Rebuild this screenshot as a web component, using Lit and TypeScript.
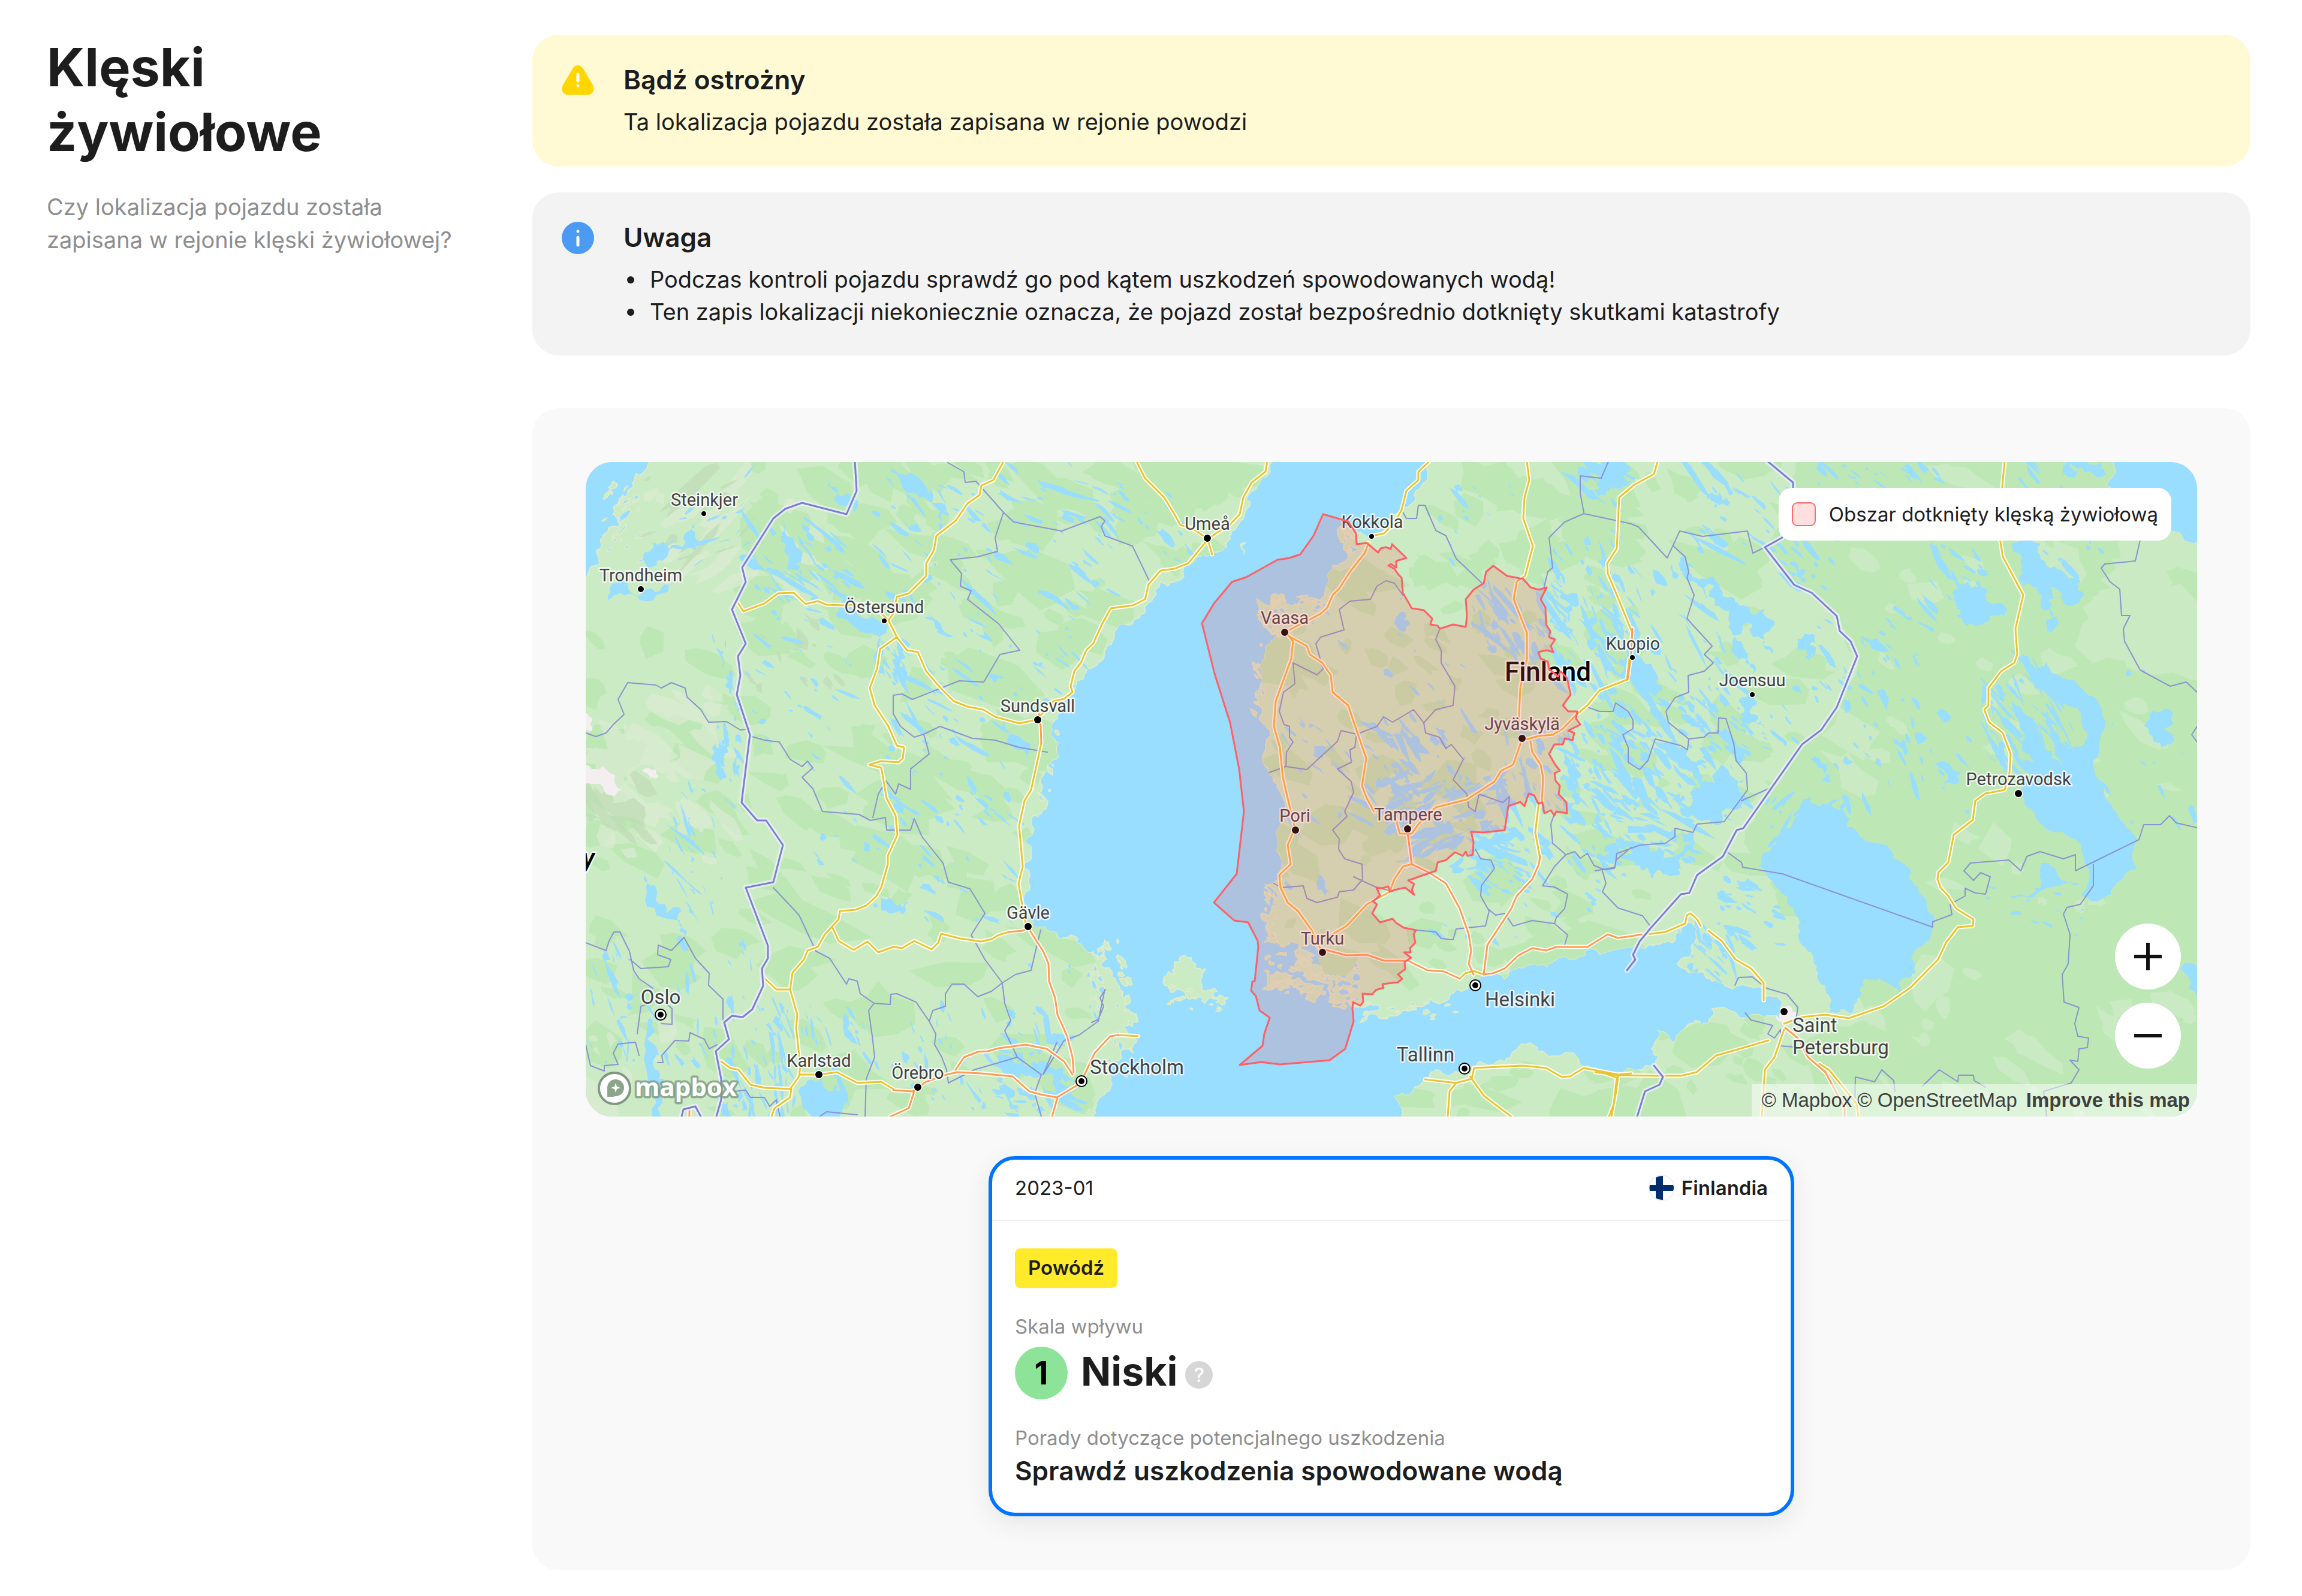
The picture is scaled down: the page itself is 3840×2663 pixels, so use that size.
import { LitElement, html, svg, css } from "lit";
import { customElement } from "lit/decorators.js";

type Pt = [number, number];

/* ---------- map geometry ---------- */

/* Each sheet maps its own survey grid onto the map canvas: [left, top, x step, y step]. */
const SHEETS: Record<string, [number, number, number, number]> = {
  W: [-6, -12, 0.574, 0.7079],
  C: [844, -12, 0.574, 0.7079],
  E: [1684, -12, 0.6505, 0.7079],
  D: [1964, 18, 0.472, 0.472],
  F: [1504, 8, 0.4464, 0.4464],
};

const at = (sheet: string, u: number, v: number): Pt => {
  const [x, y, sx, sy] = SHEETS[sheet];
  return [x + u * sx, y + v * sy];
};

/* Reads "W 1,2 3,4 C 5,6": a sheet letter, then points on that sheet. */
const points = (text: string): Pt[] => {
  const out: Pt[] = [];
  let sheet = "W";
  for (const token of text.trim().split(/\s+/)) {
    if (/^[A-Z]$/.test(token)) {
      sheet = token;
    } else {
      const [u, v] = token.split(",").map(Number);
      out.push(at(sheet, u, v));
    }
  }
  return out;
};

const random = (seed: number) => () => {
  seed = (seed * 1664525 + 1013904223) >>> 0;
  return seed / 4294967296;
};

const toPath = (list: Pt[], close = false) =>
  "M" + list.map(([x, y]) => `${Math.round(x)} ${Math.round(y)}`).join("L") + (close ? "Z" : "");

/* Splits every edge and pushes the midpoints sideways, which gives a ragged shore. */
const ragged = (list: Pt[], depth: number, amount: number, seed = 7): Pt[] => {
  const rnd = random(seed);
  let now = list;
  for (let d = 0; d < depth; d++) {
    const next: Pt[] = [];
    now.forEach((a, i) => {
      const b = now[(i + 1) % now.length];
      const dx = b[0] - a[0];
      const dy = b[1] - a[1];
      const length = Math.hypot(dx, dy);
      next.push(a);
      if (length > 6) {
        const k = (rnd() - 0.5) * amount * Math.min(1, 50 / length);
        next.push([(a[0] + b[0]) / 2 - dy * k, (a[1] + b[1]) / 2 + dx * k]);
      }
    });
    now = next;
  }
  return now;
};

const line = (text: string) => toPath(points(text));
const shore = (text: string, depth = 3, amount = 0.5, seed = 7) =>
  toPath(ragged(points(text), depth, amount, seed), true);

/* Scattered blobs in a box: [sheet, u0, v0, u1, v1, count, size, stretch, angle]. */
type Cluster = [string, number, number, number, number, number, number, number, number];
const scatter = (clusters: Cluster[], seed: number): string => {
  const rnd = random(seed);
  let d = "";
  for (const [sheet, u0, v0, u1, v1, count, size, stretch, angle] of clusters) {
    for (let i = 0; i < count; i++) {
      const [cx, cy] = at(sheet, u0 + rnd() * (u1 - u0), v0 + rnd() * (v1 - v0));
      const r = size * (0.35 + rnd() * rnd() * 1.6);
      const turn = angle + (rnd() - 0.5) * 0.7;
      const long = 1 + rnd() * stretch;
      const n = 6 + Math.floor(rnd() * 4);
      const blob: Pt[] = [];
      for (let k = 0; k < n; k++) {
        const a = (k / n) * Math.PI * 2;
        const q = r * (0.45 + rnd() * 0.8);
        const px = Math.cos(a) * q * long;
        const py = (Math.sin(a) * q) / Math.sqrt(long);
        blob.push([
          cx + px * Math.cos(turn) - py * Math.sin(turn),
          cy + px * Math.sin(turn) + py * Math.cos(turn),
        ]);
      }
      d += toPath(blob, true);
    }
  }
  return d;
};

const SCANDINAVIA = shore(
  `W 205,-60 190,30 150,75 120,110 90,140 110,165 60,195 45,235 20,275 -60,290 -60,1650 1450,1650
   C 5,1560 20,1520 60,1480 40,1440 100,1400 130,1385 90,1350 135,1335 110,1310 90,1265 60,1230 30,1160
   W 1500,1190 1460,1165 1430,1135 1360,1125 1330,1115 1300,1095 1285,1060 1298,1000 1305,930 1298,900
   1310,850 1350,830 1335,760 1352,730 1385,680 1365,650 1390,590 1430,555 1460,515 1500,490
   C 35,480 60,440 100,400 130,385 175,345 200,300 240,300 290,255 340,238 360,230 400,190 430,160
   460,120 480,70 520,40 545,-60`,
  3,
  0.6,
);

const EAST_LAND = shore(
  `C 985,-60 960,70 905,125 870,140 850,178 810,192 770,180 735,198 745,235 700,262 690,300 655,345
   620,340 570,352 535,385 480,340 485,370 500,400 545,425 505,455 488,500 475,560 488,625 520,650
   512,740 540,775 565,820 548,870 540,920 552,970 530,1010 500,1020 530,1060 510,1110 500,1150
   560,1160 600,1150 600,1190 640,1200 650,1230 700,1245 690,1290 760,1290 800,1295 840,1300 780,1338
   880,1322 950,1300 1020,1290 1060,1260 1110,1240 1200,1235 1290,1200 1350,1190 1450,1162 1568,1160
   E 110,1160 150,1155 200,1150 240,1100 245,1180 210,1200 250,1218 300,1240 370,1250 440,1275
   480,1290 475,1330 420,1320 300,1305 290,1340 230,1352 200,1385 160,1355 145,1400 158,1440 120,1450
   60,1455 0,1445 C 1400,1410 1320,1412 1240,1395 1180,1430 1130,1430 1080,1460 1000,1450 960,1480
   880,1512 890,1650 E 1650,1650 1650,210 1500,185 1440,190 1390,110 1340,90 1310,70 1310,-60`,
  3,
  0.5,
  21,
);

const ISLANDS =
  shore("C 240,1195 290,1185 330,1210 320,1250 350,1262 330,1292 290,1280 262,1262 222,1250 210,1230", 3, 0.8) +
  shore("C 365,1278 395,1280 385,1295 360,1292", 2, 0.6) +
  shore("C 432,210 447,208 442,235", 2, 0.6) +
  shore("C 600,1150 660,1170 740,1240 700,1290 640,1235", 3, 0.8) +
  shore("C 510,1222 560,1230 610,1240 600,1262 545,1262", 3, 0.8) +
  scatter(
    [
      ["C", 500, 1170, 640, 1270, 34, 7, 1, 0],
      ["C", 640, 1200, 780, 1300, 26, 9, 1, 0],
      ["C", 220, 1240, 400, 1310, 14, 4, 1, 0],
      ["C", 480, 330, 560, 440, 22, 6, 1, 1],
      ["C", 600, 330, 680, 370, 8, 6, 1, 0],
      ["C", 720, 180, 770, 230, 12, 6, 1, 1],
      ["C", 470, 440, 500, 620, 14, 4, 1, 1],
      ["C", 500, 1020, 540, 1150, 16, 5, 1, 1],
      ["C", 0, 1140, 120, 1480, 30, 5, 1, 1],
      ["C", 780, 1290, 1100, 1330, 16, 5, 2, 0],
      ["W", 1330, 560, 1380, 860, 14, 3, 1, 1],
      ["W", 1470, 1150, 1568, 1250, 12, 5, 1, 1],
      ["W", 60, 60, 180, 260, 24, 5, 2, 2.4],
    ],
    5,
  );

const RUSSIA = shore(
  `E 508,-40 510,65 440,217 555,325 672,475 620,595 530,682 380,880 420,960 520,1000 700,1330 500,1400
   700,1650 1650,1650 1650,200 1300,-40`,
  3,
  0.4,
  9,
);

const LAKES =
  shore(
    `E 520,850 550,805 610,830 640,840 680,900 800,970 830,1020 850,1070 865,1115 830,1160 822,1220
     780,1265 740,1240 690,1235 670,1290 660,1315 600,1315 590,1250 560,1190 520,1130 510,1080
     490,1040 420,970 450,930 480,880`,
  ) +
  shore(
    `D 915,645 940,650 960,690 1000,680 1050,720 1130,765 1180,800 1200,860 1190,940 1165,1020
     1210,1100 1240,1190 1275,1240 1320,1290 1305,1360 1320,1400 1250,1450 1230,1490 1170,1515
     1125,1490 1150,1400 1120,1310 1060,1270 980,1240 930,1180 905,1130 945,1065 875,980 962,1025
     930,950 890,855 880,810 930,860 975,900 985,960 1060,1038 1030,950 1035,910 1080,975 1130,965
     1147,920 1110,830 1040,800 960,760 930,700`,
    2,
    0.35,
  ) +
  shore("D 690,410 720,385 760,400 810,405 800,460 860,520 780,532 705,525 700,480", 3, 0.8) +
  shore("D 880,250 980,250 1030,330 1120,380 1135,430 1060,450 1000,410 1010,480 1030,550 1005,560 980,450 920,400 910,310", 3, 0.7) +
  shore("D 1380,840 1450,850 1440,960 1410,975 1380,950", 3, 0.7) +
  shore("D 150,580 185,575 185,640 160,665 120,620", 3, 0.8) +
  shore("D 610,1030 700,1055 690,1095 640,1105", 3, 0.6) +
  shore("D 165,1015 230,1030 240,1090 205,1098", 3, 0.7) +
  shore("D 775,750 790,760 795,880 860,960 870,1050 830,990 790,900", 3, 0.5) +
  shore("D 820,750 860,780 850,810 825,790", 3, 0.6) +
  shore("D 985,1380 1040,1410 1060,1440 1130,1460 1040,1460 870,1500 980,1470", 3, 0.4) +
  shore("W 628,1500 680,1478 740,1484 765,1510 785,1600 640,1600", 3, 0.7) +
  shore("W 745,350 800,362 850,385 885,400 880,520 862,500 840,420 760,385", 3, 0.7) +
  shore("W 1200,1440 1280,1420 1340,1430 1400,1450 1440,1495 1380,1505 1330,1465 1260,1450", 3, 0.9) +
  shore("W 192,1330 206,1330 212,1420 245,1480 240,1600 175,1600 192,1480", 3, 0.6) +
  shore("W 865,1040 910,1060 950,1055 940,1090 900,1080", 3, 0.7) +
  shore("W 180,990 215,1050 290,1075 300,1135 235,1090", 3, 0.7) +
  shore("W 75,345 105,300 190,315 270,300 250,322 120,330", 3, 0.6) +
  shore("W 190,265 235,205 300,185 345,150 340,205 300,220 240,245", 3, 0.8) +
  shore("W 385,750 395,690 430,640 425,700 420,760", 3, 0.7) +
  shore("W 560,150 590,210 650,310 610,260", 3, 0.8) +
  shore("W 725,55 790,140 750,120", 3, 0.8) +
  shore("W 895,30 1000,75 1060,130 1040,180 1000,100", 3, 0.6) +
  shore("W 1225,620 1290,720 1250,690", 2, 0.7) +
  shore("W 125,1280 160,1270 140,1320 110,1330", 3, 0.8) +
  shore("F 780,420 870,440 920,490 960,520 1040,530 1040,620 1065,700 1020,640 990,590 900,600 850,520", 3, 0.8) +
  shore("F 925,635 960,680 1005,760 990,780 940,720", 3, 0.6) +
  shore("F 630,1030 750,1060 830,1090 790,1130 850,1180 960,1170 950,1240 880,1310 820,1320 740,1240 690,1240 800,1200 740,1130 690,1090", 3, 0.9) +
  shore("F 540,1440 640,1420 760,1410 795,1450 720,1490 690,1530 620,1540 600,1490", 3, 0.9) +
  shore("F 530,660 590,640 620,760 655,830 660,930 610,920 570,840 545,790", 3, 0.9) +
  shore("F 270,480 340,500 310,560 325,640 270,620 300,560", 3, 0.9) +
  shore("F 370,10 520,-10 550,60 500,80 440,110 410,70", 3, 0.9) +
  shore("F 940,870 1000,870 1010,930 1045,985 980,960 945,930", 3, 0.8) +
  shore("F 820,120 870,95 910,130 850,155", 3, 0.8) +
  shore("F 270,1170 340,1180 350,1250 290,1270", 3, 0.9) +
  shore("F 1130,360 1180,390 1190,430 1140,410", 3, 0.8) +
  shore("F 1180,640 1225,630 1225,700 1190,720", 3, 0.8) +
  shore("F 730,890 800,930 820,990 760,970", 3, 0.9) +
  shore("E 1500,1210 1560,1200 1560,1290 1520,1260", 2, 0.5) +
  shore("E 1190,16 1300,16 1310,45 1230,45", 3, 0.7) +
  shore("C 885,380 910,370 925,400 905,430 890,410", 2, 0.6) +
  shore("C 650,990 690,1030 680,1040 655,1015", 2, 0.6);

const SMALL_LAKES = scatter(
  [
    ["W", 480, 170, 780, 340, 46, 8, 4, 0.7],
    ["W", 480, 340, 780, 760, 34, 5, 3, 0.6],
    ["W", 850, 20, 1240, 340, 50, 7, 4, 0.7],
    ["W", 1240, 20, 1568, 360, 46, 6, 4, 0.6],
    ["W", 880, 440, 960, 540, 18, 8, 3, 1],
    ["W", 960, 370, 1480, 600, 46, 6, 4, 0.6],
    ["W", 880, 620, 1300, 880, 40, 6, 3, 0.8],
    ["W", 600, 760, 1260, 1120, 40, 6, 3, 0.6],
    ["W", 240, 760, 440, 1080, 32, 5, 5, 1],
    ["W", 20, 1150, 500, 1450, 50, 5, 4, 1.3],
    ["W", 480, 1290, 720, 1480, 46, 5, 4, 1.2],
    ["W", 720, 1300, 1400, 1540, 66, 6, 3, 1.1],
    ["W", 400, 1440, 620, 1560, 36, 6, 4, 1.4],
    ["W", 380, 420, 460, 760, 24, 6, 3, 1.3],
    ["W", 1200, 1360, 1450, 1560, 40, 7, 2, 0.4],
    ["W", 1300, 1150, 1540, 1350, 14, 5, 2, 1],
    ["W", 220, 30, 500, 260, 16, 5, 4, 2.6],
    ["C", 0, 60, 300, 260, 22, 6, 3, 0.6],
    ["C", 980, 30, 1240, 280, 14, 5, 2, 0.8],
    ["C", 1100, 300, 1370, 480, 60, 7, 4, 1],
    ["C", 1330, 180, 1568, 560, 70, 7, 4, 1],
    ["C", 1380, 620, 1568, 1000, 80, 7, 3, 0.8],
    ["C", 1180, 640, 1400, 840, 50, 7, 3, 1.2],
    ["C", 830, 620, 1100, 800, 44, 8, 3, 0.9],
    ["C", 860, 760, 1200, 980, 80, 8, 3, 2.7],
    ["C", 1120, 880, 1330, 1020, 50, 8, 3, 0.6],
    ["C", 560, 620, 860, 1040, 36, 6, 3, 0.7],
    ["C", 620, 330, 1080, 620, 14, 5, 2, 0.8],
    ["C", 1000, 1000, 1480, 1160, 22, 5, 2, 0.6],
    ["C", 1420, 16, 1568, 120, 16, 8, 3, 0.7],
    ["E", 0, 250, 330, 620, 76, 7, 4, 1],
    ["E", 0, 580, 400, 860, 110, 8, 3, 0.8],
    ["E", 0, 850, 260, 970, 40, 8, 3, 0.3],
    ["E", 240, 40, 500, 250, 30, 8, 4, 0.8],
    ["E", 480, 180, 640, 320, 16, 7, 3, 0.8],
    ["E", 330, 480, 520, 700, 22, 7, 3, 0.7],
    ["E", 540, 360, 860, 560, 32, 7, 3, 0.8],
    ["E", 560, 560, 960, 850, 36, 7, 2, 1],
    ["E", 840, 200, 1000, 370, 22, 8, 3, 0.8],
    ["E", 1010, 500, 1220, 720, 50, 7, 6, 1.05],
    ["E", 1060, 20, 1300, 330, 34, 8, 3, 0.9],
    ["E", 300, 1000, 480, 1160, 30, 7, 3, 0.4],
    ["E", 240, 1110, 360, 1230, 30, 6, 4, 1],
    ["E", 1300, 500, 1540, 900, 12, 6, 2, 0.9],
    ["E", 940, 1000, 1300, 1170, 14, 5, 2, 0.3],
    ["E", 440, 810, 640, 940, 26, 6, 3, 2.2],
    ["E", 540, 16, 900, 70, 18, 7, 3, 0.7],
  ],
  42,
);

const WOODS = scatter(
  [
    ["W", 0, 380, 1450, 1560, 150, 34, 1, 0.4],
    ["W", 480, 16, 1568, 400, 70, 36, 1, 0.4],
    ["C", 0, 16, 500, 260, 26, 40, 1, 0.4],
    ["C", 500, 280, 1568, 1250, 110, 30, 1, 0.4],
    ["C", 940, 16, 1568, 300, 30, 34, 1, 0.4],
    ["C", 920, 1440, 1568, 1560, 16, 28, 1, 0],
    ["E", 0, 16, 540, 1100, 60, 34, 1, 0.4],
    ["E", 0, 1300, 560, 1560, 24, 30, 1, 0.4],
  ],
  11,
);

const MEADOWS = scatter(
  [
    ["E", 520, 30, 1540, 760, 46, 24, 1, 0.5],
    ["E", 560, 760, 1540, 1560, 34, 22, 1, 0.5],
    ["E", 1320, 330, 1540, 520, 12, 60, 0.5, 0.5],
    ["E", 1320, 200, 1500, 340, 8, 50, 0.5, 0.5],
    ["E", 840, 1230, 900, 1400, 5, 28, 0.5, 1.5],
  ],
  17,
);

const HEATH = scatter(
  [
    ["W", 10, 640, 420, 960, 26, 30, 1.5, 0.7],
    ["W", 200, 60, 460, 300, 16, 26, 2, 2.6],
    ["W", 240, 560, 400, 660, 10, 24, 1, 0.5],
    ["W", 490, 100, 680, 330, 8, 16, 2, 0.6],
    ["W", 30, 1330, 290, 1540, 10, 16, 1, 1],
  ],
  3,
);

const RIDGES = scatter(
  [
    ["W", 10, 780, 260, 900, 10, 22, 2, 0.7],
    ["W", 170, 40, 480, 260, 12, 14, 4, 2.6],
    ["W", 480, 390, 800, 620, 10, 12, 2, 0.9],
  ],
  23,
);

const SNOW =
  shore("W 0,735 40,740 60,735 95,755 115,790 70,800 40,775 0,770", 2, 0.5) +
  shore("W 0,610 30,620 30,650 0,650", 2, 0.5) +
  shore("W 175,745 215,742 222,760 195,765", 2, 0.5) +
  shore("E 465,1310 500,1300 520,1320 495,1345 470,1335", 2, 0.4);

const YELLOW_ROADS = [
  "W 450,345 468,368 530,350 570,327 615,325 650,352 685,345 710,353 760,355 840,350 885,385",
  "W 1225,16 1195,60 1160,72 1155,95 1120,115 1085,155 1030,190 1022,225 1000,255 1000,285 950,327 915,335 905,375 890,390 915,430 945,460 975,465 1000,510 1040,548 1080,580 1120,593 1165,600 1200,618 1270,633 1320,625",
  "W 915,430 865,458 858,505 837,550 850,590 890,640 915,685 935,690 932,715 920,724 870,722 835,730 870,738 885,810 912,850 917,895 888,945 888,965 870,1020 855,1040 825,1062 795,1072 750,1075 745,1095 705,1130 685,1160 655,1168 645,1190 612,1220 605,1260 625,1320 622,1350 635,1440 630,1465 605,1495 530,1492 490,1485 455,1450 430,1445 405,1430",
  "W 528,1232 565,1260 605,1260",
  "W 727,1112 745,1145 790,1167 830,1147 860,1173 905,1160 930,1162 965,1145 1015,1165 1035,1150 1043,1128 1100,1140 1160,1147 1190,1142 1210,1132 1240,1125",
  "C 510,16 505,40 465,65 440,100 430,140 400,165 360,185 336,200 280,255 240,268 200,272 165,305 155,340 120,355 55,362 30,400 5,443 W 1465,460 1450,490 1430,510 1420,545 1425,560 1400,575 1370,580 1350,600 1324,620",
  "W 1334,680 1305,790 1285,815 1270,875 1280,970 1268,1010 1278,1060 1290,1105",
  "C 130,16 155,55 210,100 240,140 258,165 290,172 336,197 350,235",
  "W 635,1461 690,1461 740,1455 800,1480 870,1477 905,1495",
  "W 550,1560 560,1540 605,1515 608,1495",
  "C 980,16 950,40 950,60 915,85 900,130 880,160 850,185 815,190",
  "C 1265,16 1272,60 1258,100 1255,150 1282,215 1260,285 1240,295",
  "C 1410,612 1440,590 1475,555 1555,530 1562,480",
  "E 95,420 90,410 60,340 32,280 30,255 55,220 62,100 100,70 150,45 160,16",
  "C 1300,820 1290,890 1303,950",
  "C 1070,1235 1085,1222 1110,1216 1140,1225",
  "E 120,1132 180,1125 230,1105 235,1085 245,1080 262,1095 270,1110",
  "E 290,1122 325,1145 360,1190 400,1210 432,1245 432,1285",
  "E 485,1340 530,1325 590,1320 650,1328 740,1300 810,1255 880,1190 900,1150 930,1113 968,1110 970,1095 925,1070 905,1040 885,1020 878,1000 880,985 905,960 910,940 920,895 968,860 975,815 1000,798 1050,790 1062,750 1065,705 1045,655 1010,630 998,600 1008,590 1008,550 1040,510 1075,490 1082,470 1077,410 1097,330 1045,240 1035,180 1045,60 1050,16",
  "E 0,1455 60,1462 150,1463 220,1463 260,1455 310,1415 370,1400 445,1380",
  "E 25,1458 55,1468 48,1530 35,1560",
  "E 484,1355 460,1420 435,1450 428,1560",
  "E 575,1435 600,1450 670,1530 675,1560",
  "C 968,1472 1060,1480 1105,1470 1112,1445 1250,1440 1320,1445 1365,1467 1390,1465 1430,1445 1530,1460 1568,1458",
  "C 1100,1465 1140,1510 1170,1530 1220,1560",
  "C 1060,1480 1040,1500 1035,1560",
  "C 1530,1465 1525,1500 1510,1560",
  "W 1560,1368 1615,1370",
];

const ORANGE_ROADS = [
  "W 1326,600 1332,640 1334,680",
  "W 1240,1125 1280,1122 1296,1115 1320,1145 1340,1170 1355,1200 1358,1240 1375,1280 1382,1320 1410,1370 1425,1420 1428,1455",
  "W 905,1497 960,1500 1000,1478 1060,1460 1090,1455 1160,1458 1250,1465 1300,1500 1340,1508 1380,1515 1450,1480",
  "W 1085,1450 1110,1420 1150,1407 1180,1405 1210,1398 1290,1390 1350,1400 1400,1430 1425,1460",
  "W 965,1500 950,1540 895,1560",
  "W 1365,1560 1382,1515",
  "W 312,1560 312,1540",
  "W 1455,1470 1490,1410 1535,1370 1560,1368",
  "E 95,410 92,470 83,530",
  "C 1303,945 1300,965 1280,1000 1235,1040 1220,1070 1150,1155 1140,1225",
  "C 918,890 930,965 980,985 1030,1010 1070,1070 1095,1130 1102,1170 1095,1200 1110,1225",
  "C 675,1165 740,1180 800,1178 850,1192 920,1192 975,1215 1025,1217 1070,1235",
  "C 1140,1225 1165,1222 1200,1210 1240,1180 1280,1163 1320,1168 1350,1160 1440,1160 1500,1130 1530,1138 1568,1135 E 110,1132 120,1130",
  "E 488,1350 520,1375 545,1420 590,1455 640,1540 640,1560",
];

const AMBER_ROADS = [
  "C 805,208 795,230 750,275 720,315 700,330 685,360 665,375 640,385 575,412",
  "C 565,418 585,440 580,480 535,580 530,640 547,690 555,760 570,810 590,880 570,920 578,965 545,990 548,1020 570,1055 600,1075 640,1120 665,1165",
  "C 575,428 625,450 635,470 670,490 695,520 700,560 745,590 770,650 798,715 785,780 800,810 820,840",
  "C 885,860 895,893 930,893 950,870 1000,830 1090,812 1170,770 1190,745 1225,730 1250,670",
  "C 1240,295 1235,300 1227,340 1265,420 1265,480 1245,550 1240,640",
  "C 1255,672 1300,662 1340,660 1370,645 1410,612",
  "C 1275,675 1280,700 1305,730 1312,760 1308,820",
  "C 930,965 905,970 880,1000 865,1030 800,1060 740,1110 690,1135",
];

const STATE_LINES = [
  "W 793,16 798,85 768,140 640,113 590,127 555,150 465,265 475,300 435,365 475,445 453,475 460,520 450,565 488,660 463,820 508,862 535,862 583,920 555,1007 475,1020 540,1157 540,1187 522,1210 527,1252 495,1307 467,1325 435,1322 413,1338 427,1378 388,1405 405,1470 405,1520 390,1560",
  "W 290,1560 295,1543 330,1535 345,1560",
  "E 443,16 508,65 508,90 480,195 435,217 510,307 555,325 620,380 627,415 655,440 672,475 620,595 580,648 530,682 380,880 363,885 327,947 262,990 242,1033 220,1035 143,1115 113,1147 97,1178 103,1190 82,1215",
  "E 150,1440 173,1467 165,1485 127,1500 107,1560",
];

const COUNTY_LINES = [
  "W 10,655 40,664 70,655 90,635 122,612 105,577 133,537 215,543 230,550 260,537 300,550 305,570 345,600 367,630 420,628 460,648 488,645",
  "W 488,662 530,672 573,677 605,718 640,735 655,722 670,738 640,760 670,787 698,840 805,848 838,862 882,855 885,885 955,885 965,857 988,900 1048,962 1065,1007 1128,1023 1170,1080 1130,1132 1170,1190 1222,1245 1228,1292 1245,1333 1228,1358 1265,1420 1335,1460 1315,1505 1335,1560",
  "W 845,855 860,800 883,768 912,800 920,775 955,788 955,740 1008,705 993,658 965,665 925,640 905,610 905,567 930,563 960,577 1095,532 1168,535 1215,470 1272,460 1210,398 1120,340 1130,320 1100,310 1103,280 1070,247 1150,240 1208,228 1200,195 1225,135 1145,62 1113,65 1110,40 1062,18",
  "W 1225,135 1255,158 1393,180 1505,145 1520,155 1508,170 1520,190 1600,215 1650,300",
  "W 993,658 1040,640 1135,668 1200,672 1270,690 1352,700",
  "W 555,1020 630,1085 680,1170 720,1187 768,1248 775,1235 800,1240 808,1270 848,1292 895,1295 897,1272 915,1270 970,1290 1008,1335 1028,1365 1025,1390 1045,1420 1060,1450",
  "W 848,1292 832,1310 843,1370 850,1420 825,1470 822,1560",
  "W 1008,1335 1020,1310 1055,1300 1055,1270 1075,1247 1110,1247 1150,1277 1190,1265 1222,1245 1260,1225 1305,1215 1320,1160 1333,1120",
  "W 10,1150 70,1168 78,1145 92,1125 110,1125 137,1170 150,1215 165,1235 205,1257",
  "W 140,1190 170,1210 250,1207 258,1190 220,1178 222,1155 260,1168 297,1137 330,1187 370,1222 367,1250 410,1282 410,1335",
  "W 205,1290 170,1300 160,1365",
  "W 230,1340 262,1342 262,1305 240,1290",
  "W 10,1390 25,1440 65,1452 65,1440 105,1437 90,1410 105,1388 155,1385 165,1415",
  "W 220,1432 235,1432 232,1415 270,1380 310,1382 313,1362 355,1378 370,1400 392,1390",
  "W 1060,1450 1065,1480 1140,1450 1265,1420",
  "W 1380,1385 1340,1460 1400,1380 1445,1368 1500,1335 1520,1260",
  "W 440,1500 475,1497 490,1515 530,1515 545,1535 565,1520 575,1560",
  "W 690,1560 710,1548 800,1555",
  "C 900,130 915,150 945,150 950,118 968,118 1000,178 1030,190 1060,245 1135,303",
  "C 1315,310 1325,275 1340,265 1330,195 1375,158 1430,138 1568,162 E 110,170 185,243 217,180 275,192 390,180 405,232 435,217",
  "C 1430,135 1420,90 1420,50 1480,55 1502,16",
  "C 1010,412 1000,435 1015,460 1015,490 1055,545 1050,590 1000,600 965,632 935,600 875,630 848,617 830,640 770,658 725,650 715,675 625,742 565,735 515,748",
  "C 905,330 880,303 855,297 830,310 810,340 750,345 720,365 733,412 665,430 652,445 672,505 655,518 585,490 590,540 558,560 545,605 560,635 575,640 575,665 585,677 567,700 565,735",
  "C 770,658 765,690 750,695 755,725 715,740 755,770 762,795 735,840 742,852 700,885 720,905 718,930 735,952 785,965 788,1000 762,1025 720,1030 715,1042 655,1055 625,1045 615,1015 550,1020 530,1010",
  "C 965,632 970,655 1010,665 1030,692 1045,682 1080,718 1050,765 1090,800 1095,830 1115,840 1125,800 1195,820 1215,805 1210,830",
  "C 762,995 830,1020 860,1025",
  "C 945,1120 1000,1125 1015,1140 1050,1143 1060,1118 1145,1110 1155,1075 1130,1040 1132,1015 1170,975 1160,955 1130,952 1115,930",
  "C 1155,1072 1175,1085 1200,1080 1225,1110 1280,1097 1345,1105 1350,1090 1375,1070 1383,1035 1345,1018 1310,1015 1345,970 1378,942 1340,915 1335,870 1345,845",
  "C 1345,1105 1383,1132 1372,1160",
  "C 1378,942 1405,935 1420,950 1440,940 1460,968 1490,978 1520,975 1525,955 1568,925",
  "C 1485,980 1495,1010 1485,1030 1530,1068 E 92,1078 122,1087 143,1113",
  "C 1410,615 1440,595 1475,605 1515,605 1522,585 1560,605 E 97,625 97,645 70,660 85,690 85,725 113,742 135,720 153,670 220,685 237,695 240,670 280,665 290,655 315,655 317,620 335,622 355,680 362,720 388,750 390,790 330,865 262,870 250,890 205,880 205,900 180,915 115,920 55,940 50,972 0,980",
  "E 455,782 375,815",
  "E 240,670 188,630 182,605 205,572 240,560 238,520 280,510 303,490 280,470 300,450 235,385 253,330 235,290 240,275 230,240 200,215",
  "E 337,935 375,960 378,972 480,988 865,1113 865,1100 915,1083 910,1060 948,1040 948,1022 975,1033 1000,1035 1013,995 988,985 970,1003 945,980 963,962 1060,955 1092,980 1107,947 1140,935 1200,952 1232,942 1232,980 1395,907 1407,872 1450,872 1472,850 1490,868 1543,878",
  "E 1277,965 1277,1015 1243,1060 1210,1067 1200,1082 1217,1130 1213,1200 1198,1225 1202,1290 1240,1303 1230,1340 1237,1370 1265,1375 1262,1397 1240,1400 1237,1430 1217,1427 1240,1450 1220,1480 1150,1500 1157,1560",
  "E 1397,200 1385,250 1307,257 1298,267 1320,300 1345,317 1350,378 1372,378 1355,410 1357,440 1398,507 1475,545 1515,535 1543,560",
  "E 1543,640 1530,660 1543,677",
  "E 358,1250 368,1232 403,1230 440,1257 492,1272 520,1303 515,1330",
  "E 385,1315 400,1332 455,1345 443,1365 460,1375 475,1355 475,1393 510,1395",
  "E 665,1530 667,1467 717,1478 735,1450 765,1475 768,1500",
  "E 840,1487 882,1450 930,1478 932,1462 970,1462 972,1475 1000,1490",
  "C 40,1260 25,1280 35,1300 20,1330 0,1338",
];

const AFFECTED = line(
  `C 320,397 355,350 408,300 450,288 540,247 575,243 607,234 645,190 673,140 745,157 768,185 770,210
   800,208 833,230 840,220 855,217 870,222 872,210 915,243 885,250 885,265 870,257 862,262 880,268
   892,282 900,290 905,325 930,362 965,366 990,385 985,400 1005,403 1012,410 1050,400 1087,405
   1090,380 1087,340 1110,318 1140,303 1147,275 1167,262 1207,285 1255,293 1275,312 1300,318
   1322,312 1305,340 1318,360 1320,400 1333,415 1330,430 1347,435 1335,450 1342,465 1322,460
   1298,465 1305,480 1325,487 1330,505 1355,522 1362,510 1382,525 1392,565 1370,590 1385,605
   1412,605 1408,622 1420,635 1395,645 1385,650 1402,655 1398,672 1375,668 1370,682 1345,682
   1330,705 1345,728 1360,745 1345,750 1348,768 1360,780 1357,800 1380,820 1382,845 1350,840
   1345,850 1335,838 1315,845 1310,820 1298,822 1285,803 1270,798 1258,828 1245,818 1210,828
   1200,885 1140,890 1103,888 1110,912 1108,942 1092,945 1087,935 1078,945 1055,937 1030,955
   1005,960 1000,980 920,1003 937,1012 930,1025 938,1037 912,1020 880,1025 865,1030 862,1017
   845,1022 828,1020 838,1038 817,1052 830,1060 815,1080 838,1102 875,1093 885,1103 908,1115
   943,1120 935,1130 940,1150 925,1162 927,1172 908,1172 928,1185 910,1195 912,1212 890,1225
   902,1235 890,1243 845,1248 848,1256 825,1262 815,1272 787,1270 790,1290 780,1298 760,1290
   758,1305 762,1335 737,1400 692,1427 547,1437 493,1431 430,1438 497,1393 502,1365 517,1327
   487,1310 478,1275 463,1263 467,1242 473,1240 484,1160 482,1145 455,1102 414,1098 355,1055
   422,988 443,840 428,740 403,632 358,515`,
) + "Z";

/* Place names: text, sheet, u, v of the baseline, anchor, style. */
const PLACES: [string, string, number, number, string, string][] = [
  ["Steinkjer", "W", 355, 120, "middle", "town"],
  ["Trondheim", "W", 170, 298, "middle", "town"],
  ["Östersund", "W", 878, 373, "middle", "town"],
  ["Sundsvall", "W", 1324, 606, "middle", "town"],
  ["Gävle", "W", 1297, 1093, "middle", "town"],
  ["Oslo", "W", 229, 1294, "middle", "city"],
  ["Karlstad", "W", 689, 1443, "middle", "town"],
  ["Örebro", "W", 975, 1471, "middle", "town"],
  ["Stockholm", "W", 1476, 1459, "start", "city"],
  ["y", "W", 36, 972, "end", "land slanted"],
  ["Umeå", "C", 337, 177, "middle", "town"],
  ["Kokkola", "C", 815, 173, "middle", "town"],
  ["Vaasa", "C", 561, 398, "middle", "town"],
  ["Finland", "C", 1325, 532, "middle", "land"],
  ["Jyväskylä", "C", 1251, 649, "middle", "town"],
  ["Pori", "C", 591, 865, "middle", "town"],
  ["Tampere", "C", 919, 862, "middle", "town"],
  ["Turku", "C", 670, 1154, "middle", "town"],
  ["Helsinki", "C", 1142, 1299, "start", "city"],
  ["Tallinn", "C", 970, 1429, "middle", "city"],
  ["Kuopio", "E", 97, 459, "middle", "town"],
  ["Joensuu", "E", 402, 545, "middle", "town"],
  ["Petrozavodsk", "E", 1085, 779, "middle", "town"],
  ["Saint", "E", 505, 1360, "start", "city"],
  ["Petersburg", "E", 505, 1413, "start", "city"],
];

/* Town dots: sheet, u, v, radius. */
const DOTS: [string, number, number, number][] = [
  ["W", 354, 138, 4],
  ["W", 170, 317, 5],
  ["W", 878, 392, 4],
  ["W", 1324, 625, 6],
  ["W", 1296, 1112, 6],
  ["W", 689, 1461, 6],
  ["W", 975, 1491, 6],
  ["C", 336, 197, 6],
  ["C", 814, 192, 4],
  ["C", 561, 418, 6],
  ["C", 1251, 668, 6],
  ["C", 592, 885, 6],
  ["C", 918, 881, 6],
  ["C", 670, 1172, 6],
  ["E", 96, 477, 4],
  ["E", 402, 565, 4],
  ["E", 1085, 798, 6],
  ["E", 485, 1313, 6],
];

const CAPITALS: [string, number, number][] = [
  ["W", 229, 1320],
  ["W", 1451, 1476],
  ["C", 1115, 1250],
  ["C", 1083, 1447],
];

@customElement("disaster-map")
export class DisasterMap extends LitElement {
  static styles = css`
    :host {
      display: block;
      position: relative;
      overflow: hidden;
      border-radius: 44px;
      color: #1d1d1d;
    }
    .canvas {
      display: block;
      width: 100%;
      height: auto;
      background: #99ddff;
    }
    .ground {
      fill: #cbebc5;
      stroke: #dcebc9;
      stroke-width: 2;
    }
    .wood {
      fill: #bde8b5;
    }
    .meadow {
      fill: #c9eac2;
    }
    .heath {
      fill: #dcebd3;
      fill-opacity: 0.7;
    }
    .ridge {
      fill: #bfdcb5;
      fill-opacity: 0.7;
    }
    .snow {
      fill: #f5eef0;
    }
    .water {
      fill: #99ddff;
    }
    .line {
      fill: none;
      stroke-linejoin: round;
      stroke-linecap: round;
    }
    .county {
      stroke: #8a93cf;
      stroke-width: 2;
    }
    .halo {
      stroke: #eef0fb;
      stroke-opacity: 0.8;
      stroke-width: 9;
    }
    .state {
      stroke: #7a7fd0;
      stroke-width: 3;
    }
    .casing {
      stroke: #fffdf2;
      stroke-width: 7;
    }
    .yellow {
      stroke: #e8c534;
      stroke-width: 3;
    }
    .amber {
      stroke: #f8b43c;
      stroke-width: 3;
    }
    .orange {
      stroke: #ff9c57;
      stroke-width: 3;
    }
    .place {
      font-family: Roboto, "Liberation Sans", sans-serif;
      fill: #434343;
      stroke: #ffffff;
      stroke-opacity: 0.75;
      stroke-width: 5px;
      stroke-linejoin: round;
      paint-order: stroke;
    }
    .town {
      font-size: 29px;
    }
    .city {
      font-size: 33px;
    }
    .land {
      font-size: 44px;
      font-weight: 500;
      fill: #000000;
    }
    .slanted {
      font-style: italic;
    }
    .dot {
      fill: #000000;
      stroke: #ffffff;
      stroke-width: 3;
      paint-order: stroke;
    }
    .ring {
      fill: #ffffff;
      stroke: #000000;
      stroke-width: 2;
    }
    .area {
      fill: #ff5a5a;
      fill-opacity: 0.2;
      stroke: #ff5f66;
      stroke-width: 3;
      stroke-linejoin: round;
    }
    .brand-ring {
      fill: #ffffff;
      stroke: #5f7a61;
      stroke-opacity: 0.75;
      stroke-width: 4;
    }
    .brand-mark {
      fill: #8ca58a;
    }
    .brand-star {
      fill: #ffffff;
    }
    .brand-name {
      font: 700 42px "Open Sans", "Noto Sans", sans-serif;
      fill: #ffffff;
      stroke: #7f9a80;
      stroke-opacity: 0.8;
      stroke-width: 7px;
      stroke-linejoin: round;
      paint-order: stroke;
    }
    .legend {
      position: absolute;
      top: 43px;
      right: 43px;
      display: flex;
      align-items: center;
      gap: 22px;
      height: 88px;
      padding: 0 22px;
      box-sizing: border-box;
      border-radius: 22px;
      background: #ffffff;
      font-size: 33px;
      line-height: 48px;
    }
    .swatch {
      width: 40px;
      height: 40px;
      box-sizing: border-box;
      border: 2px solid #ff6b6b;
      border-radius: 9px;
      background: #ffdfdf;
    }
    .zoom {
      position: absolute;
      right: 27px;
      bottom: 80px;
      display: flex;
      flex-direction: column;
      gap: 22px;
    }
    .zoom-button {
      display: grid;
      place-items: center;
      width: 110px;
      height: 110px;
      padding: 0;
      border: 0;
      border-radius: 50%;
      background: #ffffff;
      cursor: pointer;
    }
    .zoom-icon {
      width: 46px;
      height: 46px;
      fill: none;
      stroke: #111111;
      stroke-width: 6;
    }
    .credits {
      position: absolute;
      right: 0;
      bottom: 0;
      display: flex;
      gap: 9px;
      height: 54px;
      padding: 0 12px 0 16px;
      align-items: center;
      background: rgba(255, 255, 255, 0.5);
      font: 33px/48px "Liberation Sans", Arial, sans-serif;
    }
    .credit {
      color: #404040;
      text-decoration: none;
    }
    .improve {
      margin-left: 6px;
      font-weight: 700;
    }
  `;

  render() {
    const roads = [...YELLOW_ROADS, ...ORANGE_ROADS, ...AMBER_ROADS].map(line).join("");
    const land = SCANDINAVIA + EAST_LAND;
    return html`
      <svg class="canvas" viewBox="0 0 2688 1092" role="img" aria-label="Mapa obszaru powodzi">
        <clipPath id="land"><path d=${land} /></clipPath>
        <path class="ground" d=${land + ISLANDS} />
        <g clip-path="url(#land)">
          <path class="wood" d=${WOODS} />
          <path class="wood" d=${RUSSIA} />
          <path class="meadow" d=${MEADOWS} />
          <path class="heath" d=${HEATH} />
          <path class="ridge" d=${RIDGES} />
          <path class="snow" d=${SNOW} />
          <path class="water" d=${SMALL_LAKES} />
        </g>
        <path class="water" d=${LAKES} />
        <path class="line county" d=${COUNTY_LINES.map(line).join("")} />
        <path class="line casing" d=${roads} />
        <path class="line yellow" d=${YELLOW_ROADS.map(line).join("")} />
        <path class="line amber" d=${AMBER_ROADS.map(line).join("")} />
        <path class="line orange" d=${ORANGE_ROADS.map(line).join("")} />
        <path class="line halo" d=${STATE_LINES.map(line).join("")} />
        <path class="line state" d=${STATE_LINES.map(line).join("")} />
        ${DOTS.map(([sheet, u, v, r]) => {
          const [x, y] = at(sheet, u, v);
          return svg`<circle class="dot" cx=${Math.round(x)} cy=${Math.round(y)} r=${r} />`;
        })}
        ${CAPITALS.map(([sheet, u, v]) => {
          const [x, y] = at(sheet, u, v).map(Math.round);
          return svg`<circle class="ring" cx=${x} cy=${y} r="9" /><circle cx=${x} cy=${y} r="5" />`;
        })}
        ${PLACES.map(([name, sheet, u, v, anchor, kind]) => {
          const [x, y] = at(sheet, u, v);
          return svg`<text class="place ${kind}" x=${Math.round(x)} y=${Math.round(y)} text-anchor=${anchor}>${name}</text>`;
        })}
        <path class="area" d=${AFFECTED} />
        <circle class="brand-ring" cx="48" cy="1045" r="26" />
        <path class="brand-mark" d="M36 1059V1044A14 14 0 1 1 50 1058Q43 1060 36 1059Z" />
        <path class="brand-star" d="M50 1036l2 6 6 2-6 2-2 6-2-6-6-2 6-2z" />
        <text class="brand-name" x="82" y="1058">mapbox</text>
      </svg>
      <div class="legend"><span class="swatch"></span>Obszar dotknięty klęską żywiołową</div>
      <div class="zoom">
        <button class="zoom-button" type="button" aria-label="Przybliż">
          <svg class="zoom-icon" viewBox="0 0 46 46"><path d="M0 23H46M23 0V46" /></svg>
        </button>
        <button class="zoom-button" type="button" aria-label="Oddal">
          <svg class="zoom-icon" viewBox="0 0 46 46"><path d="M0 23H46" /></svg>
        </button>
      </div>
      <div class="credits">
        <a class="credit" href="#mapbox">© Mapbox</a>
        <a class="credit" href="#osm">© OpenStreetMap</a>
        <a class="credit improve" href="#improve">Improve this map</a>
      </div>
    `;
  }
}

@customElement("app-root")
export class AppRoot extends LitElement {
  static styles = css`
    :host {
      display: block;
      background: #ffffff;
      color: #1d1d1d;
      font-family: Inter, "Liberation Sans", sans-serif;
    }
    .page {
      display: grid;
      grid-template-columns: 700px minmax(0, 1fr);
      column-gap: 110px;
      padding: 58px 86px 42px 78px;
    }
    .title {
      margin: 0 0 44px;
      font-size: 88px;
      line-height: 108px;
      font-weight: 700;
    }
    .lead {
      margin: 0;
      color: #8e8e8e;
      font-size: 38px;
      line-height: 55px;
    }
    .content {
      display: flex;
      flex-direction: column;
    }
    .alert {
      display: flex;
      align-items: flex-start;
      gap: 48px;
      margin-bottom: 43px;
      padding: 44px 48px 48px;
      border-radius: 44px;
    }
    .alert.warning {
      background: #fffad4;
    }
    .alert.info {
      margin-bottom: 88px;
      padding-bottom: 46px;
      background: #f3f3f3;
    }
    .alert-icon {
      flex: none;
      width: 56px;
      height: 56px;
      margin-top: 4px;
    }
    .heading {
      margin: 0;
      font-size: 44px;
      line-height: 62px;
      font-weight: 600;
    }
    .text {
      margin: 12px 0 0;
      font-size: 38px;
      line-height: 54px;
    }
    .list {
      padding: 0;
      list-style: none;
    }
    .item {
      display: flex;
      gap: 26px;
    }
    .item::before {
      content: "";
      flex: none;
      width: 12px;
      height: 12px;
      margin: 22px 0 0 6px;
      border-radius: 50%;
      background: currentColor;
    }
    .panel {
      display: flex;
      flex-direction: column;
      align-items: center;
      gap: 66px;
      padding: 90px 89px;
      border-radius: 44px;
      background: #f9f9f9;
    }
    .map {
      width: 100%;
    }
    .card {
      width: 50%;
      box-sizing: border-box;
      border: 6px solid #0074ff;
      border-radius: 44px;
      background: #ffffff;
      box-shadow: 0 12px 44px rgba(0, 0, 0, 0.08);
    }
    .card-head {
      display: flex;
      align-items: center;
      justify-content: space-between;
      height: 102px;
      padding: 0 38px 6px;
      border-bottom: 2px solid #f0f0f0;
      box-sizing: border-box;
      font-size: 33px;
      line-height: 48px;
    }
    .country {
      display: flex;
      align-items: center;
      gap: 11px;
      font-weight: 600;
    }
    .flag {
      width: 44px;
      height: 44px;
    }
    .card-body {
      padding: 46px 38px 39px;
    }
    .badge {
      display: inline-block;
      padding: 8px 22px 10px;
      border-radius: 9px;
      background: #ffeb2a;
      font-size: 33px;
      line-height: 48px;
      font-weight: 600;
      vertical-align: top;
    }
    .label {
      margin: 40px 0 0;
      color: #8e8e8e;
      font-size: 33px;
      line-height: 48px;
    }
    .scale {
      display: flex;
      align-items: flex-start;
      margin-top: 10px;
    }
    .level {
      width: 88px;
      height: 88px;
      margin-right: 22px;
      border-radius: 50%;
      background: #8de397;
      color: #000000;
      font-size: 53px;
      line-height: 88px;
      font-weight: 700;
      text-align: center;
    }
    .level-name {
      font-size: 66px;
      line-height: 82px;
      font-weight: 700;
    }
    .help {
      width: 46px;
      height: 46px;
      margin: 24px 0 0 13px;
      padding: 0;
      border: 0;
      border-radius: 50%;
      background: #d6d6d6;
      color: #ffffff;
      font: 500 33px/46px Inter, sans-serif;
      cursor: pointer;
    }
  `;

  render() {
    return html`
      <main class="page">
        <header>
          <h1 class="title">Klęski żywiołowe</h1>
          <p class="lead">Czy lokalizacja pojazdu została zapisana w rejonie klęski żywiołowej?</p>
        </header>
        <div class="content">
          <section class="alert warning">
            <svg class="alert-icon" viewBox="0 0 56 56" aria-hidden="true">
              <path
                fill="#ffd600"
                d="M19 9C23 1 33 1 37 9L53 36C57 44 53 52 44 52H12C3 52 -1 44 3 36Z"
              />
              <path stroke="#fff" stroke-width="5" stroke-linecap="round" d="M28 18V29M28 37V37" />
            </svg>
            <div>
              <h2 class="heading">Bądź ostrożny</h2>
              <p class="text">Ta lokalizacja pojazdu została zapisana w rejonie powodzi</p>
            </div>
          </section>
          <section class="alert info">
            <svg class="alert-icon" viewBox="0 0 56 56" aria-hidden="true">
              <circle cx="28" cy="28" r="27" fill="#4b9bf5" />
              <path stroke="#fff" stroke-width="5" stroke-linecap="round" d="M28 27V40M28 17V17" />
            </svg>
            <div>
              <h2 class="heading">Uwaga</h2>
              <ul class="text list">
                <li class="item">
                  Podczas kontroli pojazdu sprawdź go pod kątem uszkodzeń spowodowanych wodą!
                </li>
                <li class="item">
                  Ten zapis lokalizacji niekoniecznie oznacza, że pojazd został bezpośrednio dotknięty
                  skutkami katastrofy
                </li>
              </ul>
            </div>
          </section>
          <section class="panel">
            <disaster-map class="map"></disaster-map>
            <article class="card">
              <div class="card-head">
                <time datetime="2023-01">2023-01</time>
                <span class="country">
                  <svg class="flag" viewBox="0 0 44 44" aria-hidden="true">
                    <circle cx="22" cy="22" r="21" fill="#fff" stroke="#f0f0f0" stroke-width="2" />
                    <path
                      fill="#002d6e"
                      d="M12 5Q17 2 24 2V17H41Q43 22 41 27H24V42Q17 42 12 39V27H2Q1 22 2 17H12Z"
                    />
                  </svg>
                  Finlandia
                </span>
              </div>
              <div class="card-body">
                <span class="badge">Powódź</span>
                <p class="label">Skala wpływu</p>
                <div class="scale">
                  <span class="level">1</span>
                  <span class="level-name">Niski</span>
                  <button class="help" type="button" aria-label="Pomoc: skala wpływu">?</button>
                </div>
                <p class="label">Porady dotyczące potencjalnego uszkodzenia</p>
                <h3 class="heading">Sprawdź uszkodzenia spowodowane wodą</h3>
              </div>
            </article>
          </section>
        </div>
      </main>
    `;
  }
}
